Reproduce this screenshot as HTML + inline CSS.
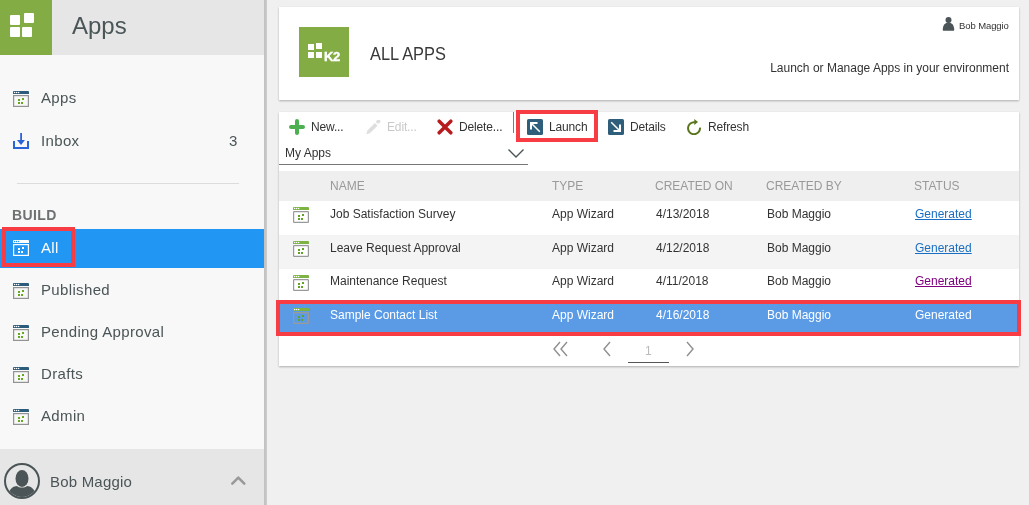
<!DOCTYPE html>
<html><head><meta charset="utf-8">
<style>
*{margin:0;padding:0;box-sizing:border-box}
html,body{width:1029px;height:505px;overflow:hidden;background:#f0f0f0;font-family:"Liberation Sans",sans-serif;-webkit-font-smoothing:antialiased}
.abs{position:absolute}
#side{position:absolute;left:0;top:0;width:264px;height:505px;background:#f8f8f8}
#sidebd{position:absolute;left:264px;top:0;width:3px;height:505px;background:linear-gradient(to right,#bfbfbf,#cdcdcd)}
#shead{position:absolute;left:0;top:0;width:264px;height:55px;background:#e6e6e6}
#sgreen{position:absolute;left:0;top:0;width:52px;height:55px;background:#84ac45}
.sq{position:absolute;background:#fff;border-radius:1px}
.stitle{position:absolute;left:72px;top:9px;font-size:24px;color:#4a5557;line-height:34px}
.item{position:absolute;left:0;width:264px;height:42px}
.item svg{position:absolute;left:13px}
.item .t{position:absolute;left:41px;font-size:15px;color:#4b5557;white-space:nowrap}
.panel{position:absolute;background:#fff;box-shadow:0 1px 2px rgba(0,0,0,.28)}
.tb{position:absolute;top:120px;font-size:12px;letter-spacing:-.15px;color:#333;white-space:nowrap}
.th{position:absolute;top:171px;font-size:12px;color:#999;white-space:nowrap}
.row{position:absolute;left:279px;width:740px}
.cell{position:absolute;font-size:12px;color:#333;white-space:nowrap}
.lnk{color:#1a6fc2;text-decoration:underline}
</style></head><body><div id="wrap" style="position:absolute;left:0;top:0;width:1029px;height:505px;will-change:transform">

<!-- sidebar -->
<div id="side"></div>
<div id="sidebd"></div>
<div id="shead"></div>
<div id="sgreen">
  <div class="sq" style="left:10px;top:15px;width:10px;height:10px"></div>
  <div class="sq" style="left:24px;top:13px;width:10px;height:10px"></div>
  <div class="sq" style="left:10px;top:27px;width:10px;height:10px"></div>
  <div class="sq" style="left:22px;top:27px;width:10px;height:10px"></div>
</div>
<div class="stitle">Apps</div>

<!-- sidebar items -->
<div class="abs" style="left:13px;top:91px">
<svg width="16" height="16" viewBox="0 0 16 16"><path d="M0 3V1a1 1 0 0 1 1-1h14a1 1 0 0 1 1 1v2z" fill="#2c5b7b"/><circle cx="1.6" cy="1.5" r=".75" fill="#fff"/><circle cx="3.6" cy="1.5" r=".75" fill="#fff"/><circle cx="5.6" cy="1.5" r=".75" fill="#fff"/><rect x=".6" y="4.6" width="14.8" height="10.8" fill="none" stroke="#939393" stroke-width="1.2"/><rect x="5" y="8" width="2" height="2" fill="#66a820"/><rect x="9" y="7" width="2" height="2" fill="#66a820"/><rect x="5" y="11" width="2" height="2" fill="#66a820"/><rect x="8" y="11" width="2" height="2" fill="#66a820"/></svg>
</div>
<div class="abs" style="left:41px;top:89px;font-size:15px;letter-spacing:.35px;color:#4b5557">Apps</div>

<div class="abs" style="left:13px;top:133px">
<svg width="16" height="16" viewBox="0 0 16 16"><path d="M1 8v7h14V8" fill="none" stroke="#2b63d9" stroke-width="2"/><rect x="7.2" y="0" width="1.8" height="8" fill="#2b63d9"/><path d="M4 7h8l-4 5z" fill="#2b63d9"/></svg>
</div>
<div class="abs" style="left:41px;top:132px;font-size:15px;letter-spacing:.35px;color:#4b5557">Inbox</div>
<div class="abs" style="left:229px;top:132px;font-size:15px;color:#4b5557">3</div>

<div class="abs" style="left:17px;top:183px;width:222px;height:1px;background:#dcdcdc"></div>
<div class="abs" style="left:12px;top:207px;font-size:14px;font-weight:bold;color:#6e7172;letter-spacing:.4px">BUILD</div>

<div class="abs" style="left:0;top:229px;width:264px;height:39px;background:#2196f3"></div>
<div class="abs" style="left:13px;top:240px">
<svg width="16" height="16" viewBox="0 0 16 16"><path d="M0 3V1a1 1 0 0 1 1-1h14a1 1 0 0 1 1 1v2z" fill="#fff"/><circle cx="1.6" cy="1.5" r=".75" fill="#2196f3"/><circle cx="3.6" cy="1.5" r=".75" fill="#2196f3"/><circle cx="5.6" cy="1.5" r=".75" fill="#2196f3"/><rect x=".6" y="4.6" width="14.8" height="10.8" fill="none" stroke="#fff" stroke-width="1.2"/><rect x="5" y="8" width="2" height="2" fill="#fff"/><rect x="9" y="7" width="2" height="2" fill="#fff"/><rect x="5" y="11" width="2" height="2" fill="#fff"/><rect x="8" y="11" width="2" height="2" fill="#fff"/></svg>
</div>
<div class="abs" style="left:41px;top:239px;font-size:15px;letter-spacing:.35px;color:#fff">All</div>
<div class="abs" style="left:2px;top:227px;width:73px;height:40px;border:4px solid #f73c43"></div>

<div class="abs" style="left:13px;top:283px"><svg width="16" height="16" viewBox="0 0 16 16"><path d="M0 3V1a1 1 0 0 1 1-1h14a1 1 0 0 1 1 1v2z" fill="#2c5b7b"/><circle cx="1.6" cy="1.5" r=".75" fill="#fff"/><circle cx="3.6" cy="1.5" r=".75" fill="#fff"/><circle cx="5.6" cy="1.5" r=".75" fill="#fff"/><rect x=".6" y="4.6" width="14.8" height="10.8" fill="none" stroke="#939393" stroke-width="1.2"/><rect x="5" y="8" width="2" height="2" fill="#66a820"/><rect x="9" y="7" width="2" height="2" fill="#66a820"/><rect x="5" y="11" width="2" height="2" fill="#66a820"/><rect x="8" y="11" width="2" height="2" fill="#66a820"/></svg></div>
<div class="abs" style="left:41px;top:281px;font-size:15px;letter-spacing:.35px;color:#4b5557">Published</div>
<div class="abs" style="left:13px;top:325px"><svg width="16" height="16" viewBox="0 0 16 16"><path d="M0 3V1a1 1 0 0 1 1-1h14a1 1 0 0 1 1 1v2z" fill="#2c5b7b"/><circle cx="1.6" cy="1.5" r=".75" fill="#fff"/><circle cx="3.6" cy="1.5" r=".75" fill="#fff"/><circle cx="5.6" cy="1.5" r=".75" fill="#fff"/><rect x=".6" y="4.6" width="14.8" height="10.8" fill="none" stroke="#939393" stroke-width="1.2"/><rect x="5" y="8" width="2" height="2" fill="#66a820"/><rect x="9" y="7" width="2" height="2" fill="#66a820"/><rect x="5" y="11" width="2" height="2" fill="#66a820"/><rect x="8" y="11" width="2" height="2" fill="#66a820"/></svg></div>
<div class="abs" style="left:41px;top:323px;font-size:15px;letter-spacing:.35px;color:#4b5557">Pending Approval</div>
<div class="abs" style="left:13px;top:367px"><svg width="16" height="16" viewBox="0 0 16 16"><path d="M0 3V1a1 1 0 0 1 1-1h14a1 1 0 0 1 1 1v2z" fill="#2c5b7b"/><circle cx="1.6" cy="1.5" r=".75" fill="#fff"/><circle cx="3.6" cy="1.5" r=".75" fill="#fff"/><circle cx="5.6" cy="1.5" r=".75" fill="#fff"/><rect x=".6" y="4.6" width="14.8" height="10.8" fill="none" stroke="#939393" stroke-width="1.2"/><rect x="5" y="8" width="2" height="2" fill="#66a820"/><rect x="9" y="7" width="2" height="2" fill="#66a820"/><rect x="5" y="11" width="2" height="2" fill="#66a820"/><rect x="8" y="11" width="2" height="2" fill="#66a820"/></svg></div>
<div class="abs" style="left:41px;top:365px;font-size:15px;letter-spacing:.35px;color:#4b5557">Drafts</div>
<div class="abs" style="left:13px;top:409px"><svg width="16" height="16" viewBox="0 0 16 16"><path d="M0 3V1a1 1 0 0 1 1-1h14a1 1 0 0 1 1 1v2z" fill="#2c5b7b"/><circle cx="1.6" cy="1.5" r=".75" fill="#fff"/><circle cx="3.6" cy="1.5" r=".75" fill="#fff"/><circle cx="5.6" cy="1.5" r=".75" fill="#fff"/><rect x=".6" y="4.6" width="14.8" height="10.8" fill="none" stroke="#939393" stroke-width="1.2"/><rect x="5" y="8" width="2" height="2" fill="#66a820"/><rect x="9" y="7" width="2" height="2" fill="#66a820"/><rect x="5" y="11" width="2" height="2" fill="#66a820"/><rect x="8" y="11" width="2" height="2" fill="#66a820"/></svg></div>
<div class="abs" style="left:41px;top:407px;font-size:15px;letter-spacing:.35px;color:#4b5557">Admin</div>

<!-- footer -->
<div class="abs" style="left:0;top:449px;width:264px;height:56px;background:#e6e6e6"></div>
<div class="abs" style="left:4px;top:463px">
<svg width="36" height="36" viewBox="0 0 36 36"><defs><clipPath id="cc"><circle cx="18" cy="18" r="16"/></clipPath></defs><circle cx="18" cy="18" r="17" fill="none" stroke="#4b5557" stroke-width="2"/><g clip-path="url(#cc)" fill="#4b5557"><ellipse cx="18" cy="15.5" rx="6.5" ry="8.5"/><path d="M4 34c0-8 6-11 9-11c2 2 8 2 10 0c3 0 9 3 9 11z"/></g></svg>
</div>
<div class="abs" style="left:50px;top:473px;font-size:15px;letter-spacing:.2px;color:#4b5557">Bob Maggio</div>
<svg class="abs" style="left:230px;top:475px" width="17" height="11" viewBox="0 0 17 11"><path d="M2.3 8.7l6-6 6 6" fill="none" stroke="#999" stroke-width="2.6" stroke-linecap="round" stroke-linejoin="round"/></svg>

<!-- header panel -->
<div class="panel" style="left:279px;top:7px;width:740px;height:93px"></div>
<div class="abs" style="left:299px;top:27px;width:50px;height:50px;background:#84ac45">
  <div class="sq" style="left:9px;top:17px;width:6px;height:6px;border-radius:0"></div>
  <div class="sq" style="left:17px;top:16px;width:6px;height:6px;border-radius:0"></div>
  <div class="sq" style="left:9px;top:25px;width:6px;height:6px;border-radius:0"></div>
  <div class="sq" style="left:17px;top:25px;width:6px;height:6px;border-radius:0"></div>
  <div class="abs" style="left:25px;top:22px;font-size:13px;font-weight:bold;color:#fff;letter-spacing:-.5px;-webkit-text-stroke:.4px #fff">K2</div>
</div>
<div class="abs" style="left:370px;top:44px;font-size:18px;color:#383838;transform:scaleX(.91);transform-origin:0 0">ALL APPS</div>
<svg class="abs" style="left:942px;top:17px" width="13" height="14" viewBox="0 0 13 14"><circle cx="6.5" cy="3" r="3" fill="#4b5557"/><path d="M1.3 13.8C.6 13.8.7 12.5.9 11.3 1.4 7.8 3.4 5.6 6.5 5.6s5.1 2.2 5.6 5.7c.2 1.2.3 2.5-.4 2.5z" fill="#4b5557"/></svg>
<div class="abs" style="left:959px;top:20px;font-size:9.5px;color:#333;letter-spacing:-.1px">Bob Maggio</div>
<div class="abs" style="left:709px;top:61px;width:300px;text-align:right;font-size:12px;color:#333">Launch or Manage Apps in your environment</div>

<!-- main panel -->
<div class="panel" style="left:279px;top:112px;width:740px;height:254px"></div>


<!-- toolbar -->
<svg class="abs" style="left:289px;top:119px" width="16" height="16" viewBox="0 0 16 16"><path d="M8 2v12M2 8h12" stroke="#4caf50" stroke-width="4" stroke-linecap="round"/></svg>
<div class="tb" style="left:311px">New...</div>
<svg class="abs" style="left:366px;top:120px" width="16" height="16" viewBox="0 0 16 16"><path d="M12 1.8l.6-.6" stroke="#dedede" stroke-width="3.6" stroke-linecap="round"/><path d="M10.2 4.3L3 11.5" stroke="#dedede" stroke-width="3.8"/><path d="M0.3 14.2l1.3-4.3 3 3z" fill="#dedede"/></svg>
<div class="tb" style="left:387px;color:#c9c9c9">Edit...</div>
<svg class="abs" style="left:437px;top:119px" width="16" height="16" viewBox="0 0 16 16"><path d="M2.2 2.2l11.6 11.6M13.8 2.2L2.2 13.8" stroke="#b81b1e" stroke-width="3.5" stroke-linecap="round"/></svg>
<div class="tb" style="left:459px">Delete...</div>
<div class="abs" style="left:513px;top:112px;width:1px;height:21px;background:#7a7a7a"></div>
<svg class="abs" style="left:527px;top:119px" width="16" height="16" viewBox="0 0 16 16"><rect width="16" height="16" rx="1.6" fill="#2f5e7b"/><path d="M3 3h7.5v2H5v5.5H3z" fill="#fff"/><path d="M4.5 4.5l8.3 8.3" stroke="#fff" stroke-width="1.5"/></svg>
<div class="tb" style="left:549px">Launch</div>
<div class="abs" style="left:516px;top:110px;width:82px;height:32px;border:4px solid #f73c43"></div>
<svg class="abs" style="left:608px;top:119px" width="16" height="16" viewBox="0 0 16 16"><rect width="16" height="16" rx="1.6" fill="#2f5e7b"/><path d="M13 13H5.5v-2H11V5.5h2z" fill="#fff"/><path d="M3.2 3.2l8.3 8.3" stroke="#fff" stroke-width="1.5"/></svg>
<div class="tb" style="left:630px">Details</div>
<svg class="abs" style="left:686px;top:119px" width="16" height="16" viewBox="0 0 16 16"><path d="M9 3.3A6 6 0 1 0 14 8.6" stroke="#5a741c" stroke-width="2" fill="none"/><path d="M8.3 0L12 2.9 8.3 5.9z" fill="#5a741c"/></svg>
<div class="tb" style="left:708px">Refresh</div>

<div class="abs" style="left:285px;top:146px;font-size:12px;color:#333">My Apps</div>
<div class="abs" style="left:279px;top:164px;width:249px;height:1px;background:#777"></div>
<svg class="abs" style="left:507px;top:148px" width="18" height="11" viewBox="0 0 18 11"><path d="M1.5 1.5l7.5 7.5 7.5-7.5" stroke="#4b5557" stroke-width="1.4" fill="none"/></svg>

<!-- table -->
<div class="abs" style="left:279px;top:171px;width:740px;height:30px;background:#efefef"></div>
<div class="th" style="left:330px;top:179px">NAME</div>
<div class="th" style="left:552px;top:179px">TYPE</div>
<div class="th" style="left:655px;top:179px">CREATED ON</div>
<div class="th" style="left:766px;top:179px">CREATED BY</div>
<div class="th" style="left:914px;top:179px">STATUS</div>
<div class="abs" style="left:279px;top:201px;width:740px;height:34px;background:#fff"></div>
<div class="abs" style="left:293px;top:207px"><svg width="16" height="16" viewBox="0 0 16 16"><path d="M0 3V1a1 1 0 0 1 1-1h14a1 1 0 0 1 1 1v2z" fill="#7cb342"/><circle cx="1.6" cy="1.5" r=".75" fill="#fff"/><circle cx="3.6" cy="1.5" r=".75" fill="#fff"/><circle cx="5.6" cy="1.5" r=".75" fill="#fff"/><rect x=".6" y="4.6" width="14.8" height="10.8" rx=".6" fill="#fff" stroke="#9a9a9a" stroke-width="1.2"/><rect x="5" y="8" width="2" height="2" fill="#62a325"/><rect x="9" y="7" width="2" height="2" fill="#62a325"/><rect x="5" y="11" width="2" height="2" fill="#62a325"/><rect x="8" y="11" width="2" height="2" fill="#62a325"/></svg></div>
<div class="cell" style="left:330px;top:207px;color:#333">Job Satisfaction Survey</div>
<div class="cell" style="left:552px;top:207px;color:#333">App Wizard</div>
<div class="cell" style="left:656px;top:207px;color:#333">4/13/2018</div>
<div class="cell" style="left:767px;top:207px;color:#333">Bob Maggio</div>
<div class="cell" style="left:915px;top:207px;color:#1a6fc2;text-decoration:underline">Generated</div>
<div class="abs" style="left:279px;top:235px;width:740px;height:34px;background:#f4f4f4"></div>
<div class="abs" style="left:293px;top:241px"><svg width="16" height="16" viewBox="0 0 16 16"><path d="M0 3V1a1 1 0 0 1 1-1h14a1 1 0 0 1 1 1v2z" fill="#7cb342"/><circle cx="1.6" cy="1.5" r=".75" fill="#fff"/><circle cx="3.6" cy="1.5" r=".75" fill="#fff"/><circle cx="5.6" cy="1.5" r=".75" fill="#fff"/><rect x=".6" y="4.6" width="14.8" height="10.8" rx=".6" fill="#fff" stroke="#9a9a9a" stroke-width="1.2"/><rect x="5" y="8" width="2" height="2" fill="#62a325"/><rect x="9" y="7" width="2" height="2" fill="#62a325"/><rect x="5" y="11" width="2" height="2" fill="#62a325"/><rect x="8" y="11" width="2" height="2" fill="#62a325"/></svg></div>
<div class="cell" style="left:330px;top:241px;color:#333">Leave Request Approval</div>
<div class="cell" style="left:552px;top:241px;color:#333">App Wizard</div>
<div class="cell" style="left:656px;top:241px;color:#333">4/12/2018</div>
<div class="cell" style="left:767px;top:241px;color:#333">Bob Maggio</div>
<div class="cell" style="left:915px;top:241px;color:#1a6fc2;text-decoration:underline">Generated</div>
<div class="abs" style="left:279px;top:269px;width:740px;height:33px;background:#fff"></div>
<div class="abs" style="left:293px;top:275px"><svg width="16" height="16" viewBox="0 0 16 16"><path d="M0 3V1a1 1 0 0 1 1-1h14a1 1 0 0 1 1 1v2z" fill="#7cb342"/><circle cx="1.6" cy="1.5" r=".75" fill="#fff"/><circle cx="3.6" cy="1.5" r=".75" fill="#fff"/><circle cx="5.6" cy="1.5" r=".75" fill="#fff"/><rect x=".6" y="4.6" width="14.8" height="10.8" rx=".6" fill="#fff" stroke="#9a9a9a" stroke-width="1.2"/><rect x="5" y="8" width="2" height="2" fill="#62a325"/><rect x="9" y="7" width="2" height="2" fill="#62a325"/><rect x="5" y="11" width="2" height="2" fill="#62a325"/><rect x="8" y="11" width="2" height="2" fill="#62a325"/></svg></div>
<div class="cell" style="left:330px;top:274px;color:#333">Maintenance Request</div>
<div class="cell" style="left:552px;top:274px;color:#333">App Wizard</div>
<div class="cell" style="left:656px;top:274px;color:#333">4/11/2018</div>
<div class="cell" style="left:767px;top:274px;color:#333">Bob Maggio</div>
<div class="cell" style="left:915px;top:274px;color:#800080;text-decoration:underline">Generated</div>
<div class="abs" style="left:279px;top:302px;width:740px;height:34px;background:#5b9be6"></div>
<div class="abs" style="left:293px;top:308px"><svg width="16" height="16" viewBox="0 0 16 16"><path d="M0 3V1a1 1 0 0 1 1-1h14a1 1 0 0 1 1 1v2z" fill="#7cb342"/><circle cx="1.6" cy="1.5" r=".75" fill="#fff"/><circle cx="3.6" cy="1.5" r=".75" fill="#fff"/><circle cx="5.6" cy="1.5" r=".75" fill="#fff"/><rect x=".6" y="4.6" width="14.8" height="10.8" rx=".6" fill="none" stroke="#9a9a9a" stroke-width="1.2"/><rect x="5" y="8" width="2" height="2" fill="#62a325"/><rect x="9" y="7" width="2" height="2" fill="#62a325"/><rect x="5" y="11" width="2" height="2" fill="#62a325"/><rect x="8" y="11" width="2" height="2" fill="#62a325"/></svg></div>
<div class="cell" style="left:330px;top:308px;color:#fff">Sample Contact List</div>
<div class="cell" style="left:552px;top:308px;color:#fff">App Wizard</div>
<div class="cell" style="left:656px;top:308px;color:#fff">4/16/2018</div>
<div class="cell" style="left:767px;top:308px;color:#fff">Bob Maggio</div>
<div class="cell" style="left:915px;top:308px;color:#fff">Generated</div>
<div class="abs" style="left:276px;top:300px;width:745px;height:36px;border:4px solid #f73c43"></div>
<!-- pager -->
<svg class="abs" style="left:551px;top:340px" width="20" height="18" viewBox="0 0 20 18"><path d="M9 2L3 9l6 7M16 2l-6 7 6 7" stroke="#8f8f8f" stroke-width="1.4" fill="none"/></svg>
<svg class="abs" style="left:601px;top:340px" width="12" height="18" viewBox="0 0 12 18"><path d="M9 2L3 9l6 7" stroke="#8f8f8f" stroke-width="1.4" fill="none"/></svg>
<div class="abs" style="left:645px;top:344px;font-size:12px;color:#bbb">1</div>
<div class="abs" style="left:628px;top:362px;width:41px;height:1px;background:#555"></div>
<svg class="abs" style="left:684px;top:340px" width="12" height="18" viewBox="0 0 12 18"><path d="M3 2l6 7-6 7" stroke="#8f8f8f" stroke-width="1.4" fill="none"/></svg>
</div></body></html>
